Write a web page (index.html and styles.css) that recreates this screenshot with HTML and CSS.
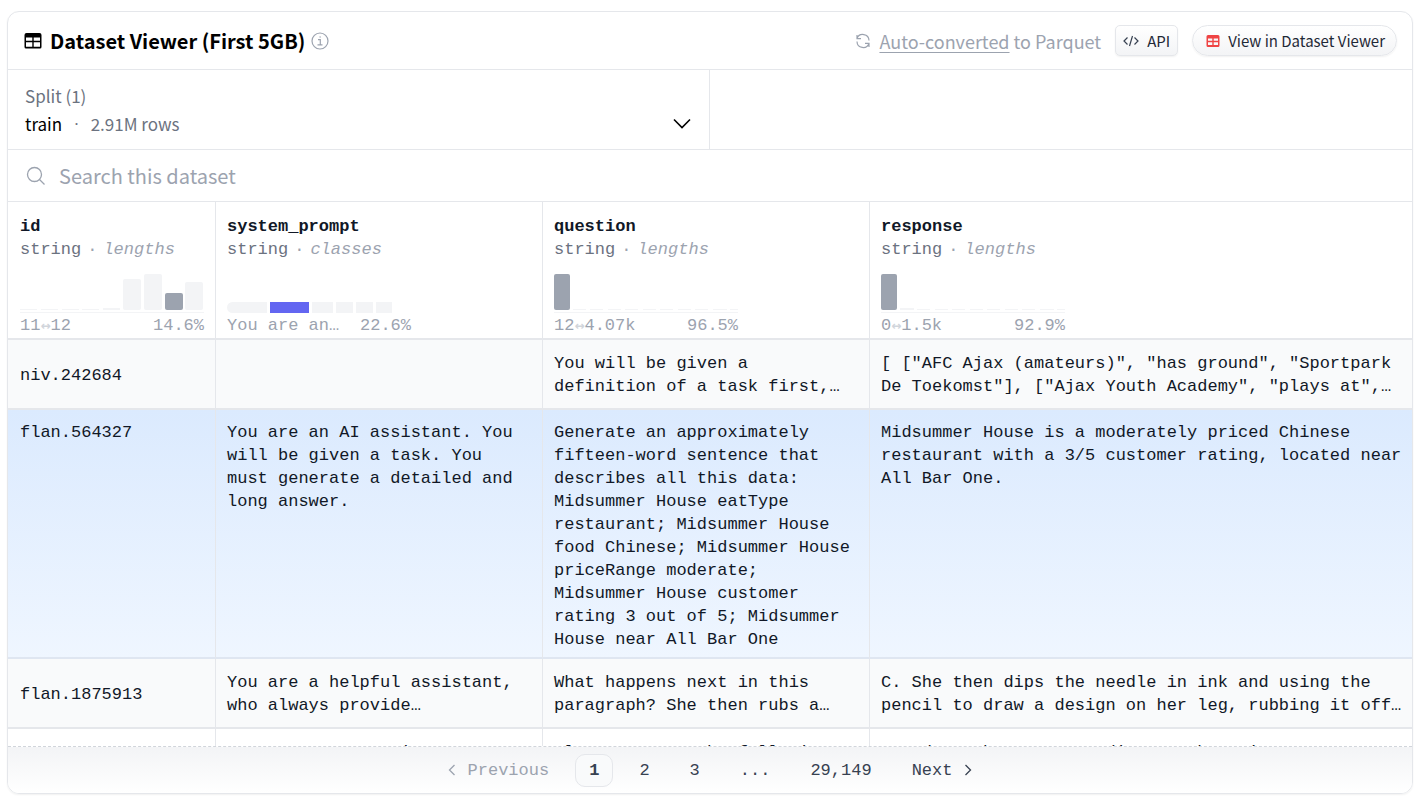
FILE: index.html
```html
<!DOCTYPE html>
<html lang="en">
<head>
<meta charset="utf-8">
<title>Dataset Viewer</title>
<link rel="stylesheet" href="styles.css">
</head>
<body>
<main class="card">
  <header class="top">
    <svg class="icon-table" viewBox="0 0 18 16" width="18" height="16" aria-hidden="true"><path fill-rule="evenodd" d="M2.500 0h13A2 2 0 0 1 17.500 2v12a1.500 1.500 0 0 1-1.500 1.500H2A1.500 1.500 0 0 1 .5 14V2a2 2 0 0 1 2-2zM2 4.500v3.300h6.300V4.500zM9.700 4.500v3.300H16V4.500zM2 9.300v4.500h6.300V9.300zM9.700 9.300v4.500H16V9.300z"/></svg>
    <h1 class="title">Dataset Viewer (First 5GB)</h1>
    <svg class="icon-info" viewBox="0 0 18 18" width="18" height="18" aria-hidden="true"><circle cx="9" cy="9" r="8"/><path d="M7 7.700h2.300v5M6.500 12.800h5M8.400 5h1.500"/></svg>
    <div class="actions">
      <svg class="icon-sync" viewBox="0 0 16 16" width="16" height="16" aria-hidden="true"><path d="M2 5.500A6.200 6.200 0 0 1 14 7.500M2 2v3.700h4M14 10.500A6.200 6.200 0 0 1 2 8.500M14 14v-3.700h-4"/></svg>
      <p class="parquet"><a href="#parquet">Auto-converted</a> to Parquet</p>
      <button class="btn" type="button"><svg class="icon-code" viewBox="0 0 16 12" width="16" height="12" aria-hidden="true"><path d="M4.500 2.500 1 6l3.500 3.500M11.500 2.500 15 6l-3.500 3.500M9.500 1l-3 10"/></svg>API</button>
      <button class="btn btn-round" type="button"><svg class="icon-red" viewBox="0 0 14 12" width="14" height="12" aria-hidden="true"><path fill-rule="evenodd" d="M2 0h10a1.500 1.500 0 0 1 1.500 1.500v9A1.500 1.500 0 0 1 12 12H2A1.500 1.500 0 0 1 .5 10.500v-9A1.500 1.500 0 0 1 2 0zM2 3.500v2.200h4.300V3.500zM7.700 3.500v2.200H12V3.500zM2 7.200v2.800h4.300V7.200zM7.700 7.200v2.800H12V7.200z"/></svg>View in Dataset Viewer</button>
    </div>
  </header>
  <section class="splits">
    <button class="split" type="button">
      <span class="split-text"><span class="muted">Split (1)</span><span class="split-row"><span>train</span><span class="muted dot">·</span><span class="muted">2.91M rows</span></span></span>
      <svg class="icon-chevron" viewBox="0 0 20 12" width="20" height="12" aria-hidden="true"><path d="M2 1.500l8 8 8-8"/></svg>
    </button>
  </section>
  <label class="search">
    <svg class="icon-search" viewBox="0 0 20 20" width="20" height="20" aria-hidden="true"><circle cx="8.500" cy="8.500" r="7"/><path d="M13.500 13.500l5 5"/></svg>
    <input type="search" placeholder="Search this dataset" aria-label="Search this dataset">
  </label>
  <div class="scroller">
    <table class="grid">
      <colgroup><col class="c-id"><col class="c-text"><col class="c-text"><col></colgroup>
      <thead>
        <tr>
          <th scope="col"><div class="name">id</div><div class="type">string<i>·</i><em>lengths</em></div>
            <svg class="hist" viewBox="0 0 184 40" width="184" height="40" aria-hidden="true"><g class="bar"><path d="M0 36h17v1H0zM21 36h17v1H21zM42 36h17v1H42zM62 36h17v1H62zM83 35h17v2H83z"/><rect x="103" y="6" width="18" height="31" rx="2"/><rect x="124" y="1" width="18" height="36" rx="2"/><rect x="165" y="9" width="18" height="28" rx="2"/><rect y="39" width="184" height="1"/></g><rect class="bar-on" x="145" y="20" width="18" height="17" rx="2"/></svg>
            <div class="range"><span>11<b>↔</b>12</span><span>14.6%</span></div></th>
          <th scope="col"><div class="name">system_prompt</div><div class="type">string<i>·</i><em>classes</em></div>
            <svg class="hist" viewBox="0 0 184 40" width="184" height="40" aria-hidden="true"><path class="bar" d="M5.500 29H40v11H5.500a5.500 5.500 0 0 1 0-11zM85 29h21v11H85zM109 29h17v11h-17zM129 29h17v11h-17zM149 29h16v11h-16z"/><path class="bar-class" d="M43 29h39v11H43z"/></svg>
            <div class="range"><span>You are an…</span><span>22.6%</span></div></th>
          <th scope="col"><div class="name">question</div><div class="type">string<i>·</i><em>lengths</em></div>
            <svg class="hist" viewBox="0 0 184 40" width="184" height="40" aria-hidden="true"><path class="bar" d="M19 36h13v1H19zM36 36h13v1H36zM54 36h13v1H54zM71 36h13v1H71zM89 36h13v1H89zM106 36h13v1h-13zM124 36h13v1h-13zM141 36h13v1h-13zM159 36h14v1h-14zM176 36h8v1h-8zM0 39h184v1H0z"/><rect class="bar-on" y="1" width="16" height="36" rx="2"/></svg>
            <div class="range"><span>12<b>↔</b>4.07k</span><span>96.5%</span></div></th>
          <th scope="col"><div class="name">response</div><div class="type">string<i>·</i><em>lengths</em></div>
            <svg class="hist" viewBox="0 0 184 40" width="184" height="40" aria-hidden="true"><path class="bar" d="M19 35h14v2H19zM36 36h13v1H36zM54 36h13v1H54zM71 36h13v1H71zM89 36h13v1H89zM106 36h13v1h-13zM124 36h13v1h-13zM141 36h13v1h-13zM159 36h14v1h-14zM176 36h8v1h-8zM0 39h184v1H0z"/><rect class="bar-on" y="1" width="16" height="36" rx="2"/></svg>
            <div class="range"><span>0<b>↔</b>1.5k</span><span>92.9%</span></div></th>
        </tr>
      </thead>
      <tbody>
        <tr class="alt"><td>niv.242684</td><td></td><td>You will be given a definition of a task first,…</td><td>[ ["AFC Ajax (amateurs)", "has ground", "Sportpark De Toekomst"], ["Ajax Youth Academy", "plays at",…</td></tr>
        <tr class="open"><td>flan.564327</td><td>You are an AI assistant. You will be given a task. You must generate a detailed and long answer.</td><td>Generate an approximately fifteen-word sentence that describes all this data: Midsummer House eatType restaurant; Midsummer House food Chinese; Midsummer House priceRange moderate; Midsummer House customer rating 3 out of 5; Midsummer House near All Bar One</td><td>Midsummer House is a moderately priced Chinese restaurant with a 3/5 customer rating, located near All Bar One.</td></tr>
        <tr class="alt"><td>flan.1875913</td><td>You are a helpful assistant, who always provide…</td><td>What happens next in this paragraph? She then rubs a…</td><td>C. She then dips the needle in ink and using the pencil to draw a design on her leg, rubbing it off…</td></tr>
        <tr class="partial"><td></td><td>You are an AI assistant. You</td><td>Please answer the following</td><td>Based on the passage, discuss the primary</td></tr>
      </tbody>
    </table>
  </div>
  <nav class="pager" aria-label="Pages">
    <button class="page prev" type="button" disabled><svg viewBox="0 0 8 12" width="8" height="12" aria-hidden="true"><path d="M6.500 1l-5 5 5 5"/></svg>Previous</button>
    <button class="page current" type="button" aria-current="page">1</button>
    <button class="page" type="button">2</button>
    <button class="page" type="button">3</button>
    <span class="page">...</span>
    <button class="page" type="button">29,149</button>
    <button class="page" type="button">Next<svg viewBox="0 0 8 12" width="8" height="12" aria-hidden="true"><path d="M1.500 1l5 5-5 5"/></svg></button>
  </nav>
</main>
</body>
</html>
```

FILE: styles.css
```css
* { box-sizing: border-box; }
body {
  margin: 0;
  height: 100vh;
  padding: 11px 9px 10px 7px;
  display: flex;
  background: #fff;
  color: #000;
  font: 18px/28px "Noto Sans CJK SC", "Open Sans", sans-serif;
}
button { font: inherit; color: inherit; background: none; border: 0; padding: 0; cursor: pointer; }
svg { flex: none; display: block; }
.card {
  flex: 1;
  min-width: 0;
  display: flex;
  flex-direction: column;
  border: 1px solid #e5e7eb;
  border-radius: 12px;
  box-shadow: 0 1px 2px rgba(0, 0, 0, .06);
  overflow: hidden;
}
.top {
  display: flex;
  align-items: center;
  min-height: 58px;
  padding: 0 15px 0 16px;
  border-bottom: 1px solid #e5e7eb;
}
.title { margin: 0 6px 0 8px; font-size: 20px; font-weight: 600; line-height: 28px; white-space: nowrap; }
.icon-info, .icon-sync { fill: none; stroke: #9ca3af; stroke-width: 1.2; }
.actions { margin-left: auto; display: flex; align-items: center; white-space: nowrap; color: #9ca3af; }
.parquet { margin: 0 14px 0 8px; }
.parquet a { color: inherit; text-decoration: underline; text-decoration-thickness: 1px; text-underline-offset: 3px; }
.btn {
  display: flex;
  align-items: center;
  gap: 8px;
  height: 31px;
  padding: 0 7px;
  border: 1px solid #e5e7eb;
  border-radius: 5px;
  background: linear-gradient(#fff, #f3f4f6);
  box-shadow: 0 1px 2px rgba(0, 0, 0, .06);
  color: #1f2937;
  font-size: 15px;
  line-height: 20px;
}
.btn-round { margin-left: 14px; padding: 0 11px 0 13px; border-radius: 16px; }
.icon-code { fill: none; stroke: #374151; stroke-width: 1.2; }
.icon-red { fill: #ef4444; }
.splits { display: grid; grid-template-columns: 1fr 1fr; border-bottom: 1px solid #e5e7eb; }
.split {
  display: flex;
  align-items: center;
  justify-content: space-between;
  padding: 12px 17px 11px;
  border-right: 1px solid #e5e7eb;
  text-align: left;
  font-size: 17px;
}
.split-text, .split-row { display: flex; }
.split-text { flex-direction: column; }
.split-row { gap: 12px; }
.muted { color: #6b7280; }
.dot { font-family: "Open Sans", sans-serif; }
.icon-chevron { align-self: flex-end; margin-bottom: 8px; fill: none; stroke: #000; stroke-width: 1.6; }
.search { display: flex; align-items: center; gap: 13px; height: 52px; padding: 0 18px; border-bottom: 1px solid #e5e7eb; }
.icon-search { fill: none; stroke: #9ca3af; stroke-width: 1.3; }
.search input { flex: 1; min-width: 0; padding: 0; border: 0; outline: 0; background: none; font: 20px/28px "Noto Sans CJK SC", "Open Sans", sans-serif; }
.search input::placeholder { color: #9ca3af; opacity: 1; }
.scroller { flex: 1; min-height: 0; overflow: hidden; }
.grid {
  width: 100%;
  table-layout: fixed;
  border-collapse: separate;
  border-spacing: 0;
  color: #111827;
  font: 17px/23px "Liberation Mono", monospace;
}
.c-id { width: 208px; }
.c-text { width: 327px; }
.grid th, .grid td { border-right: 1px solid #e5e7eb; text-align: left; }
.grid th { padding: 13px 11px 1px; border-bottom: 2px solid #e5e7eb; font-weight: 400; }
.name { font-weight: 700; }
.type { display: flex; gap: 6px; color: #6b7280; }
.type i, .type em { color: #9ca3af; }
.type i { font-style: normal; }
.hist { margin: 12px 0 1px; }
.bar { fill: #f3f4f6; }
.bar-on { fill: #9ca3af; }
.bar-class { fill: #6366f1; }
.range { display: flex; justify-content: space-between; width: 184px; color: #9ca3af; white-space: nowrap; }
.range b { font: 700 12px/12px "DejaVu Sans", sans-serif; color: #d1d5db; }
.grid td { padding: 12px 11px 10px; border-bottom: 2px solid #e5e7eb; vertical-align: middle; }
.alt td { background: #f9fafb; }
.open { background: linear-gradient(#dbeafe, #eff6ff); }
.grid .open td { padding: 11px 11px 6px; vertical-align: top; border-bottom-color: #dfe6f1; }
.grid .partial td { vertical-align: top; }
.grid th:first-child, .grid .alt td:first-child, .grid .open td:first-child { padding-left: 12px; }
.grid th:last-child, .grid td:last-child, .grid .open td:last-child { border-right: 0; padding-right: 8px; }
.pager {
  display: flex;
  align-items: center;
  justify-content: center;
  height: 47px;
  border-top: 1px dashed #d1d5db;
  background: linear-gradient(#f3f4f6, #fff);
  color: #374151;
  font: 17px/23px "Liberation Mono", monospace;
}
.page { display: flex; align-items: center; gap: 12px; padding: 0 20px; height: 33px; }
.page svg { fill: none; stroke: currentColor; stroke-width: 1.3; }
.prev { color: #9ca3af; padding-right: 26px; }
.current { padding: 0 13px; margin-right: 6px; border: 1px solid #e5e7eb; border-radius: 10px; background: #f9fafb; font-weight: 700; }
```
